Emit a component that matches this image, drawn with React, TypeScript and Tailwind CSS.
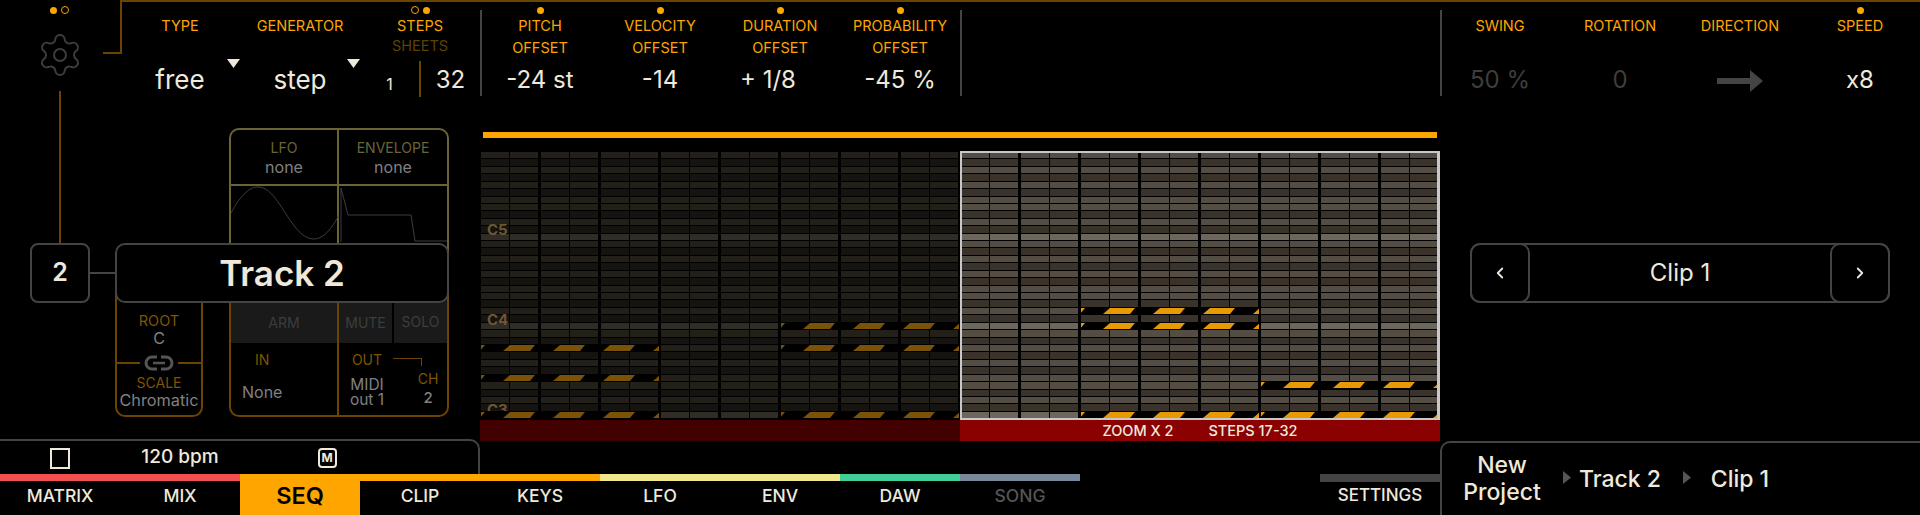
import React from "react";
import { Settings, ChevronLeft, ChevronRight } from "lucide-react";

const ROWS = Array.from({ length: 36 }, (_, i) => i);
const GROUPS = Array.from({ length: 8 }, (_, i) => i);
const PERIOD = 7.417;

function rowKind(i: number) {
  const n = i % 12;
  if (n === 11) return "c";
  if ([1, 3, 5, 8, 10].includes(n)) return "b";
  return "w";
}

function Dot() {
  return <span className="block w-[7px] h-[7px] rounded-full bg-[#ffa500]" />;
}
function Ring() {
  return <span className="block w-[8px] h-[8px] rounded-full border-[1.5px] border-[#ffa500]" />;
}

function Label({ children, dim }: { children: React.ReactNode; dim?: boolean }) {
  return (
    <div className={`h-[16px] leading-[16px] text-[14.5px] whitespace-nowrap text-center ${dim ? "text-[#5e4200]" : "text-[#ffa500]"}`}>
      {children}
    </div>
  );
}

function Value({ children, dim, big }: { children: React.ReactNode; dim?: boolean; big?: boolean }) {
  return (
    <div className={`mt-[8px] h-[32px] leading-[32px] ${big ? "text-[26px]" : "text-[24px]"} whitespace-nowrap text-center ${dim ? "text-[#3d3d3d]" : "text-[#efe9dc]"}`}>
      {children}
    </div>
  );
}

function Caret() {
  return (
    <svg className="absolute left-[107px] top-[57px]" width="13" height="9" viewBox="0 0 13 9">
      <polygon points="0,0 13,0 6.5,9" fill="#efe9dc" />
    </svg>
  );
}

function Col({
  dots,
  label,
  sub,
  value,
  dimValue,
  caret,
}: {
  dots?: boolean;
  label: string;
  sub?: string;
  value?: React.ReactNode;
  dimValue?: boolean;
  caret?: boolean;
}) {
  return (
    <div className="relative w-[120px] shrink-0">
      <div className="h-[16px] flex items-center justify-center">{dots && <Dot />}</div>
      <Label>{label}</Label>
      <div className="mt-[6px]">{sub ? <Label>{sub}</Label> : <div className="h-[16px]" />}</div>
      <Value dim={dimValue} big={caret}>{value}</Value>
      {caret && <Caret />}
    </div>
  );
}

function VLine() {
  return <div className="w-[2px] h-[86px] mt-[8px] -mr-[2px] bg-[#444] shrink-0" />;
}

function Note({ left, top, width, color }: { left: number; top: number; width: number; color: string }) {
  const ks = [-1, 0, 1, 2, 3];
  return (
    <svg
      className="absolute bg-black"
      style={{ left, top: 1 + top * PERIOD - 0.5, width, height: 8 }}
      viewBox={`0 0 ${width} 8`}
    >
      {ks.map((k) => (
        <polygon
          key={k}
          points={`${29 + 50 * k},1 ${54 + 50 * k},1 ${49 + 50 * k},7 ${22 + 50 * k},7`}
          fill={color}
        />
      ))}
    </svg>
  );
}

function Grid({ colors }: { colors: { w: string; b: string; c: string } }) {
  return (
    <div className="h-[266px] flex flex-col gap-px mt-px">
      {ROWS.map((r) => {
        const kind = rowKind(r);
        const bg = kind === "c" ? colors.c : kind === "b" ? colors.b : colors.w;
        return (
          <div key={r} className="flex-1 min-h-0 flex">
            {GROUPS.map((g) => (
              <div key={g} className="w-[60px] pl-px pr-[2px] flex gap-px">
                <div className="flex-1" style={{ backgroundColor: bg }} />
                <div className="flex-1" style={{ backgroundColor: bg }} />
              </div>
            ))}
          </div>
        );
      })}
    </div>
  );
}

function Gear() {
  return <Settings size={48} strokeWidth={1} color="#3d3d3d" />;
}

function LeftPanels() {
  return (
    <div className="relative h-[336px] w-[480px] flex">
      <div className="w-[115px] shrink-0">
        <div className="ml-[59px] w-[2px] h-[138px] bg-[#6b4500]" />
      </div>

      <div className="mt-[168px] w-[88px] h-[144px] shrink-0 border-2 border-t-0 border-[#6b4500] rounded-b-[10px] flex flex-col items-center text-center">
        <div className="mt-[40px] h-[16px] leading-[16px] text-[14.5px] text-[#7f5500]">ROOT</div>
        <div className="h-[18px] leading-[18px] text-[16px] text-[#808080]">C</div>
        <div className="relative mt-[8px] w-full h-[16px] flex items-center justify-center">
          <div className="absolute left-0 right-0 top-[7px] h-[2px] bg-[#6b4500]" />
          <svg className="relative bg-black px-[4px] box-content" width="30" height="16" viewBox="0 0 30 16" fill="none" stroke="#555" strokeWidth="3">
            <path d="M13 2H8a6 6 0 0 0 0 12h5" />
            <path d="M17 2h5a6 6 0 0 1 0 12h-5" />
            <path d="M9 8h12" strokeWidth="2.5" />
          </svg>
        </div>
        <div className="mt-[4px] h-[16px] leading-[16px] text-[14px] text-[#7f5500]">SCALE</div>
        <div className="h-[18px] leading-[18px] text-[16.3px] text-[#808080]">Chromatic</div>
      </div>

      <div className="ml-[26px] w-[220px] shrink-0 flex flex-col">
        <div className="mt-[23px] h-[145px] border-2 border-b-0 border-[#6b6437] rounded-t-[10px]">
          <div className="h-[56px] flex border-b-2 border-[#6b6437] text-center text-[14px]">
            <div className="w-[108px] pt-[9px] border-r-2 border-[#6b6437]">
              <div className="leading-[18px] text-[#6b6437]">LFO</div>
              <div className="leading-[20px] text-[16px] text-[#808080]">none</div>
            </div>
            <div className="flex-1 pt-[9px]">
              <div className="leading-[18px] text-[#6b6437]">ENVELOPE</div>
              <div className="leading-[20px] text-[16px] text-[#808080]">none</div>
            </div>
          </div>
          <div className="flex h-[87px]">
            <div className="w-[108px] border-r-2 border-[#6b6437]">
              <svg width="108" height="58" viewBox="0 0 108 58" fill="none" stroke="#444" strokeWidth="0.9">
                <path d="M0 27C8 12 17 1 27 1C38 1 46 14 55 28C64 42 72 53 83 53C93 53 101 42 108 29" />
              </svg>
            </div>
            <div className="flex-1">
              <svg width="108" height="58" viewBox="0 0 108 58" fill="none" stroke="#444" strokeWidth="0.9">
                <path d="M2 56V2L9 29H72L76 55H108" />
              </svg>
            </div>
          </div>
        </div>
        <div className="h-[144px] border-2 border-t-0 border-[#6b4500] rounded-b-[10px] flex text-[14px]">
          <div className="w-[108px] border-r-2 border-[#6b4500] flex flex-col">
            <div className="h-[70px] bg-[#1a1a1a] flex items-end justify-center pb-[10px] text-[#3d3d3d]">ARM</div>
            <div className="mt-[8px] ml-[24px] leading-[18px] text-[#7f5500]">IN</div>
            <div className="mt-[14px] ml-[11px] leading-[18px] text-[16px] text-[#808080]">None</div>
          </div>
          <div className="flex-1 flex flex-col">
            <div className="h-[70px] flex gap-[2px]">
              <div className="flex-1 bg-[#1a1a1a] flex items-end justify-center pb-[10px] text-[#3d3d3d]">MUTE</div>
              <div className="flex-1 bg-[#1a1a1a] flex items-end justify-center pb-[11px] text-[#3d3d3d]">SOLO</div>
            </div>
            <div className="flex">
              <div className="w-[56px] text-center">
                <div className="mt-[8px] leading-[18px] text-[#7f5500]">OUT</div>
                <div className="mt-[8px] leading-[15px] text-[15.5px] text-[#808080]">
                  MIDI
                  <br />
                  out 1
                </div>
              </div>
              <div className="flex-1 text-center">
                <div className="-ml-[2px] mt-[15px] w-[29px] h-[8px] border-t border-r border-[#6b4500]" />
                <div className="ml-[14px] mt-[4px] leading-[18px] text-[#7f5500]">CH</div>
                <div className="ml-[14px] mt-px leading-[18px] text-[15px] font-medium text-[#808080]">2</div>
              </div>
            </div>
          </div>
        </div>
      </div>

      <div className="absolute left-[30px] top-[138px] flex items-center">
        <div className="w-[60px] h-[60px] rounded-[8px] border-2 border-[#444] bg-black flex items-center justify-center text-[25px] font-semibold">
          2
        </div>
        <div className="w-[25px] h-[2px] bg-[#444]" />
        <div className="w-[334px] h-[60px] rounded-[10px] border-2 border-[#444] bg-black flex items-center justify-center text-[35px] font-semibold">
          Track 2
        </div>
      </div>
    </div>
  );
}

const TABS = [
  { t: "MATRIX", c: "bg-[#f25050]" },
  { t: "MIX", c: "bg-[#f25050]" },
  { t: "SEQ", c: "bg-[#ffa500]", active: true },
  { t: "CLIP", c: "bg-[#ffa500]" },
  { t: "KEYS", c: "bg-[#ffa500]" },
  { t: "LFO", c: "bg-[#f0e68c]" },
  { t: "ENV", c: "bg-[#f0e68c]" },
  { t: "DAW", c: "bg-[#40d097]" },
  { t: "SONG", c: "bg-[#778899]", dim: true },
];

function Tab({ t, c, active, dim }: { t: string; c: string; active?: boolean; dim?: boolean }) {
  if (active) {
    return (
      <div className="w-[120px] h-[41px] bg-[#ffa500] flex items-center justify-center pt-[2px] text-[23.5px] font-semibold text-black">
        {t}
      </div>
    );
  }
  return (
    <div className="w-[120px] h-[41px]">
      <div className={`h-[7px] ${c}`} />
      <div className={`h-[28px] mt-px leading-[28px] text-center text-[17.5px] font-medium ${dim ? "text-[#555]" : "text-[#efe9dc]"}`}>{t}</div>
    </div>
  );
}

function Crumb({ children, shift }: { children: React.ReactNode; shift?: boolean }) {
  return (
    <div className={`relative w-[120px] h-full flex items-center justify-center text-center text-[23px] leading-[27px] font-medium ${shift ? "pr-[4px]" : ""}`}>
      {children}
    </div>
  );
}

function CrumbArrow() {
  return (
    <svg className="absolute left-[1px] top-[28px]" width="8" height="13" viewBox="0 0 8 13">
      <polygon points="0,0 8,6.5 0,13" fill="#555" />
    </svg>
  );
}

export default function App() {
  return (
    <div className="relative w-[1920px] h-[515px] overflow-hidden bg-black text-[#efe9dc] font-[Inter,sans-serif]">
      {/* Header */}
      <div className="flex h-[105px]">
        <div className="relative w-[120px] shrink-0 flex flex-col items-center">
          <div className="h-[20px] flex items-center gap-[4px] -ml-[1px]">
            <Dot />
            <Ring />
          </div>
          <div className="mt-[11px]">
            <Gear />
          </div>
          <div className="mt-[12px] w-[2px] flex-1 bg-[#6b4500]" />
          <div className="absolute left-[103px] top-0 w-[19px] h-[54px] border-r-2 border-b-2 border-[#6b4500]" />
        </div>
        <div className="flex-1 flex border-t-2 border-[#6b4500]">
          <Col label="TYPE" value="free" caret />
          <Col label="GENERATOR" value="step" caret />
          <div className="relative w-[120px] shrink-0">
            <div className="h-[16px] flex items-center justify-center gap-[4px]">
              <Ring />
              <Dot />
            </div>
            <Label>STEPS</Label>
            <div className="mt-[4px]">
              <Label dim>SHEETS</Label>
            </div>
            <div className="mt-[7px] h-[36px] flex">
              <div className="w-[59px] pt-[8px] text-center text-[16px] leading-[30px]">1</div>
              <div className="w-[2px] h-[36px] bg-[#6b4500]" />
              <div className="w-[59px] text-center text-[24px] leading-[38px]">32</div>
            </div>
          </div>
          <VLine />
          <Col dots label="PITCH" sub="OFFSET" value="-24 st" />
          <Col dots label="VELOCITY" sub="OFFSET" value="-14" />
          <Col dots label="DURATION" sub="OFFSET" value={<span className="-ml-[24px] inline-block">+ 1/8</span>} />
          <Col dots label="PROBABILITY" sub="OFFSET" value="-45 %" />
          <VLine />
          <div className="w-[480px] shrink-0" />
          <VLine />
          <Col label="SWING" value="50 %" dimValue />
          <Col label="ROTATION" value="0" dimValue />
          <Col
            label="DIRECTION"
            value={
              <svg className="inline-block" width="46" height="22" viewBox="0 0 46 22">
                <path d="M0 8H33V0L46 11L33 22V14H0Z" fill="#444" />
              </svg>
            }
          />
          <Col dots label="SPEED" value="x8" />
        </div>
      </div>

      {/* Main */}
      <div className="flex h-[336px]">
        <LeftPanels />
        <div className="w-[960px] shrink-0">
          <div className="mt-[27px] mx-[3px] h-[6px] bg-[#ffa500]" />
          <div className="mt-[13px] h-[269px] flex">
            <div className="relative w-[480px]">
              <Grid colors={{ w: "#232019", b: "#161410", c: "#302d27" }} />
              <div className="absolute left-[7px] top-[71px] text-[15px] leading-[16px] font-bold text-[#6e5632]">C5</div>
              <div className="absolute left-[7px] top-[161px] text-[15px] leading-[16px] font-bold text-[#6e5632]">C4</div>
              <div className="absolute left-[7px] top-[251px] text-[15px] leading-[16px] font-bold text-[#6e5632]">C3</div>
              <Note left={1} top={26} width={178} color="#7a5208" />
              <Note left={1} top={30} width={178} color="#7a5208" />
              <Note left={1} top={35} width={178} color="#7a5208" />
              <Note left={301} top={23} width={178} color="#7a5208" />
              <Note left={301} top={26} width={178} color="#7a5208" />
              <Note left={301} top={35} width={178} color="#7a5208" />
            </div>
            <div className="relative w-[480px]">
              <Grid colors={{ w: "#544d43", b: "#3a332b", c: "#6c675c" }} />
              <Note left={121} top={21} width={178} color="#e89a05" />
              <Note left={121} top={23} width={178} color="#e89a05" />
              <Note left={121} top={35} width={178} color="#e89a05" />
              <Note left={301} top={31} width={177} color="#e89a05" />
              <Note left={301} top={35} width={177} color="#e89a05" />
              <div className="absolute inset-0 border-2 border-r-[3px] border-[#c8c8c8]" />
            </div>
          </div>
          <div className="flex h-[21px]">
            <div className="w-[480px] bg-[#430000]" />
            <div className="w-[480px] bg-[#8b0000] flex text-[14.5px] leading-[21px] font-medium text-[#efe9dc]">
              <div className="ml-[128px] w-[100px] text-center whitespace-nowrap">ZOOM X 2</div>
              <div className="w-[130px] text-center whitespace-nowrap">STEPS 17-32</div>
            </div>
          </div>
        </div>
        <div className="w-[480px] shrink-0 pt-[138px] px-[30px]">
          <div className="h-[60px] rounded-[10px] border-2 border-[#444] flex items-center">
            <div className="-ml-[2px] w-[60px] h-[60px] rounded-[10px] border-2 border-[#444] flex items-center justify-center">
              <ChevronLeft size={18} strokeWidth={2.4} />
            </div>
            <div className="flex-1 text-center text-[24px]">Clip 1</div>
            <div className="-mr-[2px] w-[60px] h-[60px] rounded-[10px] border-2 border-[#444] flex items-center justify-center">
              <ChevronRight size={18} strokeWidth={2.4} />
            </div>
          </div>
        </div>
      </div>

      {/* Footer */}
      <div className="flex h-[74px]">
        <div className="w-[1440px] shrink-0">
          <div className="-mt-[2px] w-[480px] h-[35px] border-t-2 border-r-2 border-[#444] rounded-tr-[10px] flex items-center">
            <div className="w-[120px] flex justify-center">
              <div className="w-[20px] h-[21px] mt-[1px] border-[2.5px] border-[#efe9dc]" />
            </div>
            <div className="w-[120px] text-center text-[19px] font-medium">120 bpm</div>
            <div className="w-[174px] flex justify-center">
              <div className="w-[19px] h-[20px] rounded-[4px] border-2 border-[#efe9dc] flex items-center justify-center text-[12px] leading-none font-bold">
                M
              </div>
            </div>
          </div>
          <div className="flex">
            {TABS.map((x) => (
              <Tab key={x.t} {...x} />
            ))}
            <div className="w-[240px]" />
            <div className="w-[120px]">
              <div className="h-[8px] bg-[#444]" />
              <div className="h-[27px] leading-[27px] text-center text-[17px] font-medium">SETTINGS</div>
            </div>
          </div>
        </div>
        <div className="w-[480px] shrink-0 h-[74px] border-t-2 border-l-2 border-[#444] rounded-tl-[10px] flex">
          <Crumb>
            New
            <br />
            Project
          </Crumb>
          <Crumb shift>
            <CrumbArrow />
            Track 2
          </Crumb>
          <Crumb shift>
            <CrumbArrow />
            Clip 1
          </Crumb>
        </div>
      </div>
    </div>
  );
}
